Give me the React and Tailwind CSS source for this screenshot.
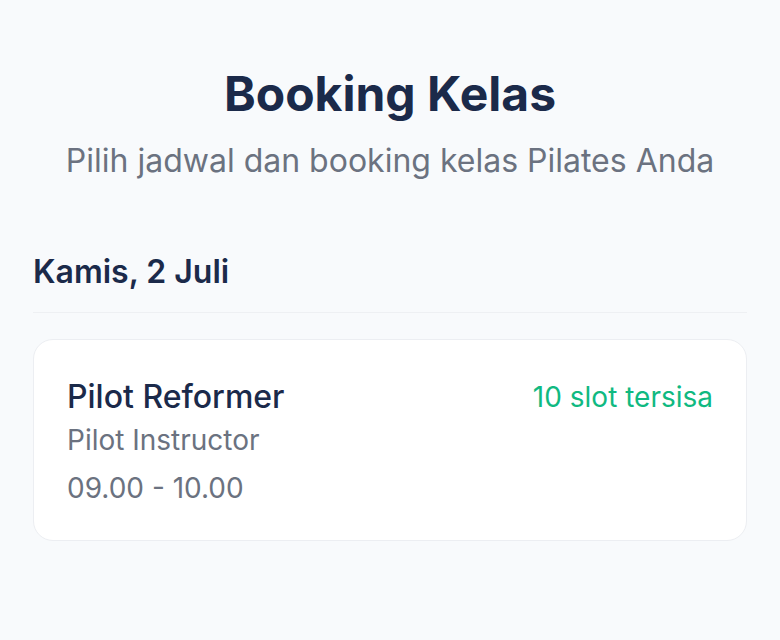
import React from 'react';

const classes = [
  {
    id: 1,
    name: 'Pilot Reformer',
    instructor: 'Pilot Instructor',
    time: '09.00 - 10.00',
    slots: 10,
  },
];

const BookingPage = () => {
  return (
    <div className="min-h-screen bg-[#f8fafc] px-[33px] pt-[66px] font-['Inter',sans-serif]">
      {/* Header */}
      <div className="text-center">
        <h1 className="text-[48px] leading-[56px] font-bold text-[#1b2a4a]">
          Booking Kelas
        </h1>
        <p className="mt-[19px] text-[32px] leading-[40px] text-[#6b7280]">
          Pilih jadwal dan booking kelas Pilates Anda
        </p>
      </div>

      {/* Day */}
      <div className="mt-[71px]">
        <h2 className="text-[32px] leading-[40px] font-semibold text-[#1b2a4a] pb-[20px] border-b border-[#eef0f3]">
          Kamis, 2 Juli
        </h2>

        <div className="mt-[26px] flex flex-col gap-4">
          {classes.map((c) => (
            <div
              key={c.id}
              className="bg-white border border-[#eceef2] rounded-[20px] px-[33px] pt-[37px] pb-[34px] flex justify-between items-start"
            >
              <div>
                <h3 className="text-[32px] leading-[40px] font-medium text-[#1b2a4a]">
                  {c.name}
                </h3>
                <p className="mt-[5px] text-[28px] leading-[36px] text-[#6b7280]">
                  {c.instructor}
                </p>
                <p className="mt-[12px] text-[28px] leading-[36px] text-[#6b7280]">
                  {c.time}
                </p>
              </div>
              <span className="text-[28px] leading-[40px] text-[#10b981]">
                {c.slots} slot tersisa
              </span>
            </div>
          ))}
        </div>
      </div>
    </div>
  );
};

export default BookingPage;
